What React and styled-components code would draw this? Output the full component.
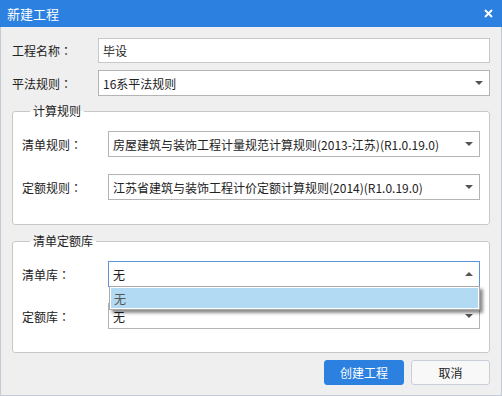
import React from "react";
import styled, { createGlobalStyle } from "styled-components";

const GlobalStyle = createGlobalStyle`
  html, body {
    margin: 0;
    padding: 0;
    background: #efefef;
  }
  * {
    box-sizing: border-box;
  }
`;

const Window = styled.div`
  width: 502px;
  height: 396px;
  display: flex;
  flex-direction: column;
  background: #efefef;
  border: 1px solid #c4cad5;
  border-top: none;
  font-family: "Noto Sans CJK SC", "Noto Sans", sans-serif;
  font-size: 12px;
  color: #222;
`;

const TitleBar = styled.div`
  height: 27px;
  flex: none;
  display: flex;
  align-items: center;
  justify-content: space-between;
  padding: 0 9px 0 7px;
  margin: 0 -1px;
  background: #2c80df;
  color: #fff;
  font-size: 13px;
`;

const CloseButton = styled.button`
  width: 10px;
  height: 10px;
  padding: 0;
  border: none;
  background: transparent;
  display: flex;
  align-items: center;
  justify-content: center;
  cursor: pointer;
`;

const Body = styled.div`
  flex: 1;
  display: flex;
  flex-direction: column;
  padding: 11px 11px 0 11px;
`;

const Row = styled.div`
  display: flex;
  align-items: center;
  margin-top: ${(p) => p.gap || 0}px;
`;

const Label = styled.label`
  width: ${(p) => p.width || 86}px;
  flex: none;
  white-space: nowrap;
`;

// centred full-width colon, as the original UI font draws it
const Colon = styled.span`
  font-family: "Noto Sans CJK TC", "Noto Sans CJK SC", sans-serif;
`;

const Field = styled.div`
  position: relative;
  flex: 1;
  height: ${(p) => p.h || 26}px;
  display: flex;
  align-items: center;
  padding: 0 22px 0 4px;
  background: #fff;
  border: 1px solid ${(p) => (p.focused ? "#5f93d8" : p.plain ? "#c8c8c8" : "#b4b4b4")};
  color: #222;
  white-space: nowrap;
`;

const Arrow = styled.span`
  position: absolute;
  right: 6px;
  top: 50%;
  margin-top: -2px;
  width: 0;
  height: 0;
  border-left: 4px solid transparent;
  border-right: 4px solid transparent;
  ${(p) =>
    p.up
      ? "border-bottom: 4px solid #555;"
      : "border-top: 4px solid #555;"}
`;

const Group = styled.fieldset`
  margin: ${(p) => p.top}px 0 0 0;
  padding: 12px 9px ${(p) => p.bottom}px 9px;
  background: #fff;
  border: 1px solid #c8c8c8;
  border-radius: 3px;
  min-width: 0;
`;

const Legend = styled.legend`
  margin-left: 8px;
  padding: 0 3px;
  font-size: 12px;
  color: #222;
  line-height: 16px;
`;

const DropList = styled.ul`
  position: absolute;
  left: 0;
  right: -1px;
  top: 24px;
  margin: 0;
  padding: 1px;
  list-style: none;
  background: #fff;
  border: 1px solid #a9a9a9;
  box-shadow: 3px 3px 3px rgba(0, 0, 0, 0.45);
  z-index: 2;
`;

const DropItem = styled.li`
  height: 20px;
  display: flex;
  align-items: center;
  padding: 0 3px;
  background: ${(p) => (p.active ? "#b3daf3" : "transparent")};
  color: #555;
`;

const Footer = styled.div`
  display: flex;
  justify-content: flex-end;
  gap: 7px;
  margin-top: 7px;
`;

const Button = styled.button`
  width: ${(p) => p.w}px;
  height: 25px;
  border-radius: 3px;
  font-family: inherit;
  font-size: 12px;
  cursor: pointer;
  border: 1px solid ${(p) => (p.primary ? "#2c80df" : "#c8cfda")};
  background: ${(p) => (p.primary ? "#2c80df" : "#f8f8f8")};
  color: ${(p) => (p.primary ? "#fff" : "#222")};
`;

const App = () => {
  return (
    <>
      <GlobalStyle />
      <Window>
        <TitleBar>
          <span>新建工程</span>
          <CloseButton aria-label="关闭">
            <svg width="9" height="9" viewBox="0 0 9 9">
              <path d="M1 1L8 8M8 1L1 8" stroke="#fff" strokeWidth="1.8" />
            </svg>
          </CloseButton>
        </TitleBar>
        <Body>
          <Row>
            <Label>工程名称<Colon>：</Colon></Label>
            <Field h={25} plain>毕设</Field>
          </Row>
          <Row gap={7}>
            <Label>平法规则<Colon>：</Colon></Label>
            <Field>
              16系平法规则
              <Arrow />
            </Field>
          </Row>

          <Group top={7} bottom={24}>
            <Legend>计算规则</Legend>
            <Row>
              <Label>清单规则<Colon>：</Colon></Label>
              <Field>
                房屋建筑与装饰工程计量规范计算规则(2013-江苏)(R1.0.19.0)
                <Arrow />
              </Field>
            </Row>
            <Row gap={17}>
              <Label>定额规则<Colon>：</Colon></Label>
              <Field>
                江苏省建筑与装饰工程计价定额计算规则(2014)(R1.0.19.0)
                <Arrow />
              </Field>
            </Row>
          </Group>

          <Group top={8} bottom={23}>
            <Legend>清单定额库</Legend>
            <Row>
              <Label>清单库<Colon>：</Colon></Label>
              <Field focused h={26}>
                无
                <Arrow up />
                <DropList>
                  <DropItem active>无</DropItem>
                </DropList>
              </Field>
            </Row>
            <Row gap={16}>
              <Label>定额库<Colon>：</Colon></Label>
              <Field>
                无
                <Arrow />
              </Field>
            </Row>
          </Group>

          <Footer>
            <Button primary w={80}>创建工程</Button>
            <Button w={79}>取消</Button>
          </Footer>
        </Body>
      </Window>
    </>
  );
};

export default App;
